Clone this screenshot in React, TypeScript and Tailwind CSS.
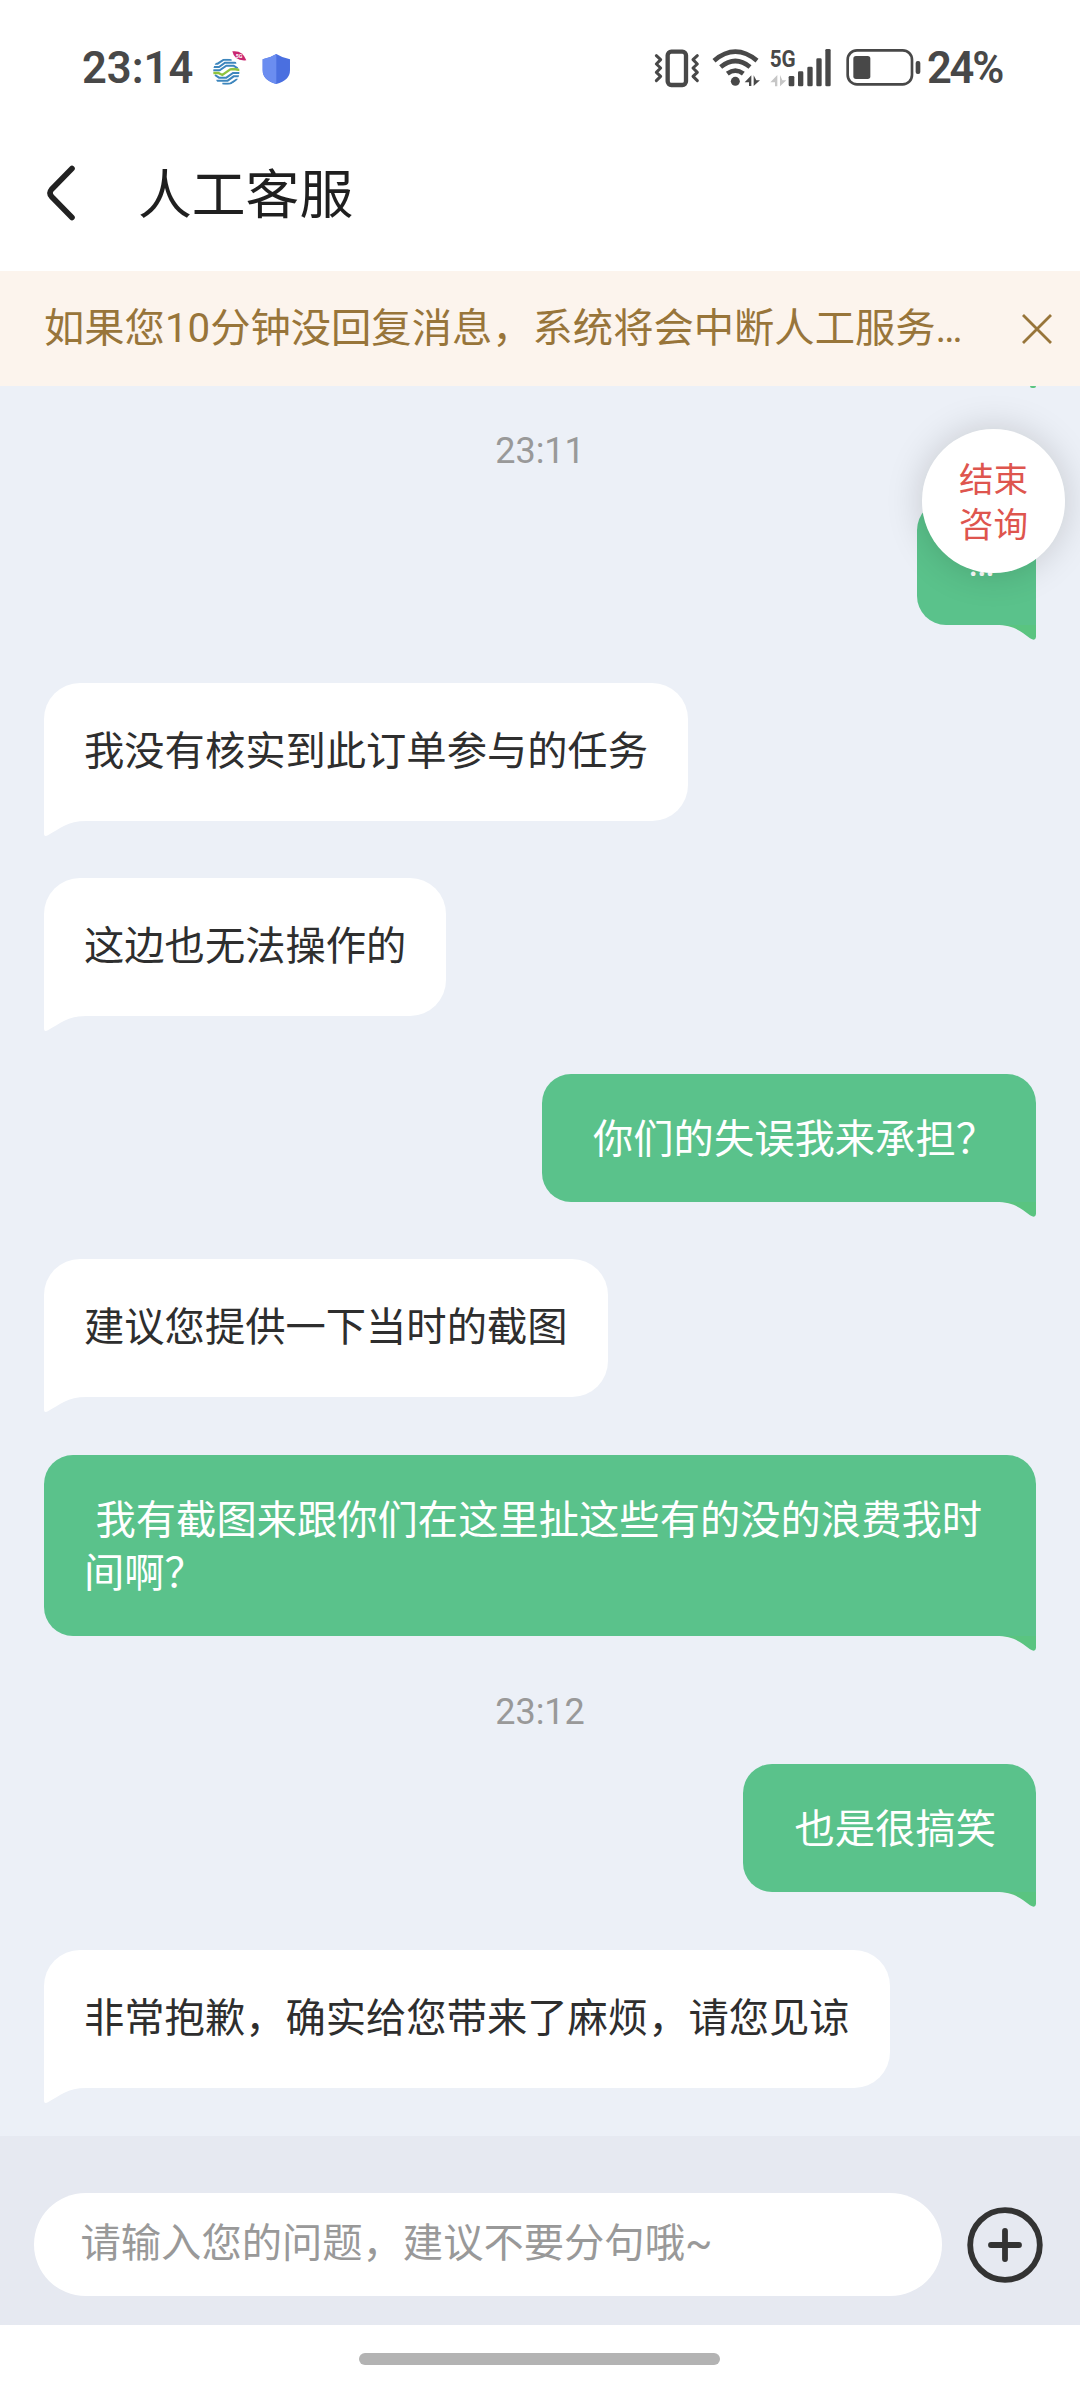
import React from 'react';

interface Message {
  id: number;
  from: 'agent' | 'me';
  text: string;
  time?: string;
  timeClass?: string;
  paddingClass?: string;
}

const messages: Message[] = [
  { id: 1, from: 'me', text: '…', time: '23:11', timeClass: 'mt-[47px] mb-[32px]', paddingClass: 'pl-10 pr-[41px] pt-[35px] pb-[35.5px]' },
  { id: 2, from: 'agent', text: '我没有核实到此订单参与的任务' },
  { id: 3, from: 'agent', text: '这边也无法操作的' },
  { id: 4, from: 'me', text: '你们的失误我来承担？' },
  { id: 5, from: 'agent', text: '建议您提供一下当时的截图' },
  { id: 6, from: 'me', text: '我有截图来跟你们在这里扯这些有的没的浪费我时间啊？' },
  { id: 7, from: 'me', text: '也是很搞笑', time: '23:12', timeClass: 'mt-[57.6px] mb-[34px]' },
  { id: 8, from: 'agent', text: '非常抱歉，确实给您带来了麻烦，请您见谅' },
];

function VibrateIcon() {
  return (
    <svg viewBox="40 50 144 124" className="w-12 h-[41.33px]" fill="none" stroke="#484848">
      <rect x="84" y="64" width="55" height="100" rx="11" strokeWidth="13" />
      <path d="M50 76l13 12-13 13 13 12-13 13 13 12-13 13" strokeWidth="9" strokeLinecap="round" strokeLinejoin="round" />
      <path d="M173 76l-13 12 13 13-13 12 13 13-13 12 13 13" strokeWidth="9" strokeLinecap="round" strokeLinejoin="round" />
    </svg>
  );
}

function WifiIcon() {
  return (
    <svg viewBox="214 50 150 124" className="ml-[10px] w-[50px] h-[41.33px]" fill="none" stroke="#484848" strokeWidth="14">
      <path d="M223 91Q287 37 352 91" />
      <path d="M243 110Q287 74 331 110" />
      <path d="M263 130Q287 112 311 130" />
      <circle cx="287" cy="153" r="13.5" fill="#484848" stroke="none" />
      <path d="M335 135v32h-7v-11h-13zM342 135v32l19-17h-11z" fill="#484848" stroke="none" />
    </svg>
  );
}

function SignalIcon() {
  return (
    <svg viewBox="388 50 190 124" className="ml-2 w-[63.33px] h-[41.33px] overflow-visible" fill="#484848">
      <text x="390" y="110" fontFamily="Roboto, sans-serif" fontSize="74" fontWeight="700" textLength="78" lengthAdjust="spacingAndGlyphs">5G</text>
      <path d="M413 134v34h-7v-12h-14zM421 134v34l19-18h-12z" fill="#c6c6c6" />
      <rect x="447" y="137" width="17" height="31" rx="4" />
      <rect x="475" y="123" width="16" height="45" rx="4" />
      <rect x="503" y="109" width="16" height="59" rx="4" />
      <rect x="530" y="84" width="16" height="84" rx="4" />
      <rect x="557" y="56" width="16" height="112" rx="4" />
    </svg>
  );
}

function BatteryIcon() {
  return (
    <svg viewBox="616 50 228 124" className="ml-[12.67px] w-[76px] h-[41.33px]">
      <rect x="624" y="60" width="193" height="102" rx="28" fill="none" stroke="#484848" strokeWidth="8" />
      <rect x="641" y="77" width="51" height="69" rx="8" fill="#484848" />
      <rect x="828" y="92" width="14" height="39" rx="6" fill="#484848" />
    </svg>
  );
}

function CarrierIcon() {
  return (
    <svg viewBox="455 50 106 106" className="ml-[18px] w-[35.33px] h-[35.33px]">
      <defs>
        <clipPath id="globe">
          <rect x="459" y="76" width="78" height="78" rx="35" />
        </clipPath>
      </defs>
      <g clipPath="url(#globe)" fill="none" strokeWidth="6">
        <g stroke="#3d86bd">
          <path d="M462 91h10l18-12h24" />
          <path d="M456 101h20l18-13h34" />
          <path d="M456 111h22l20-14h22l12 8" />
          <path d="M540 139h-12l-18 12h-24" />
          <path d="M540 129h-20l-18 13h-34" />
          <path d="M540 119h-22l-20 14h-22l-12-8" />
        </g>
        <path d="M456 119h18l12 6 24-17 10-1 20 3" stroke="#8fc43f" strokeWidth="7" />
      </g>
      <path d="M516 54q31-4 42 27-36 3-42-27z" fill="#c9256f" />
      <text x="526" y="75" fontFamily="Roboto, sans-serif" fontSize="16" fontWeight="700" fill="#fff">5G</text>
    </svg>
  );
}

function ShieldIcon() {
  return (
    <svg viewBox="608 66 86 96" className="ml-[15px] mt-[3px] w-[28.67px] h-8">
      <path d="M651 69q17 11 41 16v33q0 30-41 41-41-11-41-41V85q24-5 41-16z" fill="#4a6fe0" />
      <path d="M651 69v90q-41-11-41-41V85q24-5 41-16z" fill="#6b8df0" />
    </svg>
  );
}

function StatusBar() {
  return (
    <div className="flex h-[135px] items-center pl-[82px] text-[43.5px] leading-none font-semibold text-[#484848]">
      <span className="mt-[2px] w-[112px] whitespace-nowrap">23:14</span>
      <CarrierIcon />
      <ShieldIcon />
      <div className="ml-[362px] flex items-center">
        <VibrateIcon />
        <WifiIcon />
        <SignalIcon />
        <BatteryIcon />
        <span className="ml-[6px] mt-[2px] tracking-[-2.2px]">24%</span>
      </div>
    </div>
  );
}

function Header() {
  return (
    <div className="flex h-[136px] items-start pl-[46px]">
      <svg viewBox="0 0 30 56" className="mt-[30px] h-14 w-[30px]" fill="none" stroke="#222" strokeWidth="5.6" strokeLinecap="round">
        <path d="M26 3.5L5.5 24.5q-3 3.5 0 7L26 52.5" />
      </svg>
      <h1 className="ml-[62px] mt-[25px] text-[53.8px] leading-[72px] text-[#1f1f1f]">人工客服</h1>
    </div>
  );
}

function Notice() {
  return (
    <div className="flex h-[115px] items-center bg-[#fcf4ed] pl-11 text-[#98753a]">
      <p className="w-[930px] whitespace-nowrap text-[40.3px] leading-[60px]">
        如果您10分钟没回复消息，系统将会中断人工服务<span className="tracking-tight">…</span>
      </p>
      <svg viewBox="0 0 30 30" className="ml-12 h-[30px] w-[30px]" stroke="currentColor" strokeWidth="2.8">
        <path d="M1 1l28 28M29 1L1 29" />
      </svg>
    </div>
  );
}

function RightTail() {
  return (
    <svg viewBox="0 0 40 16" className="absolute top-full right-0 h-4 w-10" fill="#5ac480">
      <path d="M0 0C17 0 25 6 34 13.3Q39.5 16.5 40 12V0z" />
    </svg>
  );
}

function LeftTail() {
  return (
    <svg viewBox="0 0 42 16" className="absolute top-full left-0 h-4 w-[42px]" fill="#fff">
      <path d="M42 0C24 0 15 8 4 14.3Q0 16 0 13V0z" />
    </svg>
  );
}

function Bubble({ message }: { message: Message }) {
  if (message.from === 'agent') {
    return (
      <div className="relative self-start rounded-[36px] rounded-bl-none bg-white px-10 pt-[42px] pb-[42.5px] text-[#2e2e2e]">
        <p>{message.text}</p>
        <LeftTail />
      </div>
    );
  }
  return (
    <div className={`relative self-end rounded-[29px] rounded-br-none bg-[#5ac28b] text-white ${message.paddingClass ?? 'px-10 pt-[39px] pb-[35.5px]'}`}>
      <p className="indent-[11.5px]">{message.text}</p>
      <RightTail />
    </div>
  );
}

function Chat() {
  return (
    <div className="relative h-[1750px] overflow-hidden bg-[#ecf0f7] px-11">
      <div className="absolute top-0 right-11 h-[2px] w-[6px] rounded-b-full bg-[#5ac480]" />
      <div className="flex flex-col text-[40.3px] leading-[53.5px]">
        {messages.map((message, index) => (
          <React.Fragment key={message.id}>
            {message.time && (
              <time className={`self-center text-[36px] leading-9 text-[#999] ${message.timeClass}`}>{message.time}</time>
            )}
            {!message.time && index > 0 && <div className="h-[57.6px]" />}
            <Bubble message={message} />
          </React.Fragment>
        ))}
      </div>
      <button className="absolute top-[43px] right-[15px] flex h-36 w-[143px] flex-col items-center justify-center rounded-full bg-white pt-[3px] text-[34.6px] leading-[45px] text-[#de554e] shadow-[0_0_36px_rgba(0,0,0,0.17)]">
        <span>结束</span>
        <span>咨询</span>
      </button>
    </div>
  );
}

function InputBar() {
  return (
    <div className="flex h-[189px] items-start bg-[#e6e9f1] pl-[34px] pt-[57px]">
      <div className="flex h-[103px] w-[908px] items-center rounded-full bg-white pl-[46.5px] text-[40.3px] text-[#999]">
        请输入您的问题，建议不要分句哦~
      </div>
      <svg viewBox="0 0 76 76" className="ml-[25px] mt-[13.5px] h-[76px] w-[76px]" fill="none" stroke="#333" strokeWidth="5.8" strokeLinecap="round">
        <circle cx="38" cy="38" r="34.8" />
        <path d="M24 38h28M38 24v28" />
      </svg>
    </div>
  );
}

export default function App() {
  return (
    <div className="h-[2392px] w-[1080px] overflow-hidden bg-white font-[Roboto,'Noto_Sans_CJK_SC',sans-serif]" lang="zh-CN">
      <StatusBar />
      <Header />
      <Notice />
      <Chat />
      <InputBar />
      <div className="ml-[359px] mt-[27.5px] h-3 w-[361px] rounded-full bg-[#b3b3b3]" />
    </div>
  );
}
